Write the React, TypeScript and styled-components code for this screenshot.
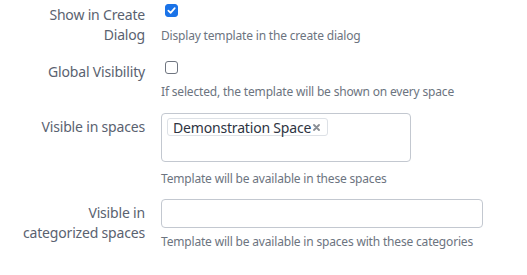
import React from "react";
import styled, { createGlobalStyle } from "styled-components";

const Global = createGlobalStyle`
  html, body { margin: 0; padding: 0; background: #ffffff; }
  body { font-family: "Noto Sans", "Open Sans", sans-serif; }
`;

const Form = styled.div`
  display: flex;
  flex-direction: column;
  padding-top: 4px;
`;

const Row = styled.div<{ $gap: number }>`
  display: grid;
  grid-template-columns: 145px 1fr;
  column-gap: 16px;
  margin-bottom: ${(p) => p.$gap}px;
`;

const Label = styled.label<{ $pt: number }>`
  justify-self: end;
  text-align: right;
  width: 128px;
  padding-top: ${(p) => p.$pt}px;
  font-size: 14px;
  letter-spacing: -0.18px;
  line-height: 20px;
  color: #5a6270;
`;

const Control = styled.div`
  display: flex;
  flex-direction: column;
  align-items: flex-start;
`;

const Help = styled.div<{ $mt: number }>`
  margin-top: ${(p) => p.$mt}px;
  font-size: 12px;
  letter-spacing: -0.18px;
  line-height: 18px;
  color: #6c7480;
`;

const Check = styled.span<{ $on?: boolean }>`
  display: inline-flex;
  align-items: center;
  justify-content: center;
  box-sizing: border-box;
  width: 13px;
  height: 13px;
  margin-left: 4px;
  border-radius: 3px;
  border: 1px solid ${(p) => (p.$on ? "#1a73e8" : "#6f7580")};
  background: ${(p) => (p.$on ? "#1a73e8" : "#ffffff")};
`;

const Box = styled.div<{ $w: number; $h: number }>`
  box-sizing: border-box;
  width: ${(p) => p.$w}px;
  height: ${(p) => p.$h}px;
  border: 1px solid #c3c8d0;
  border-radius: 4px;
  padding: 4px 5px;
  display: flex;
  flex-wrap: wrap;
  align-items: flex-start;
  background: #fff;
`;

const Tag = styled.span`
  display: inline-flex;
  align-items: center;
  gap: 2px;
  box-sizing: border-box;
  height: 18px;
  padding: 0 7px 0 5px;
  border: 1px solid #dde1e6;
  border-radius: 3px;
  font-size: 14px;
  letter-spacing: -0.18px;
  color: #2e3442;
  background: #fff;
`;

export default function App() {
  return (
    <>
      <Global />
      <Form>
        <Row $gap={16}>
          <Label $pt={1}>Show in Create Dialog</Label>
          <Control>
            <Check $on>
              <svg width="9" height="9" viewBox="0 0 10 10">
                <path d="M1.5 5.2 L4 7.6 L8.6 2.4" fill="none" stroke="#fff" strokeWidth="1.9" strokeLinecap="round" strokeLinejoin="round" />
              </svg>
            </Check>
            <Help $mt={10}>Display template in the create dialog</Help>
          </Control>
        </Row>
        <Row $gap={12}>
          <Label $pt={1}>Global Visibility</Label>
          <Control>
            <Check />
            <Help $mt={9}>If selected, the template will be shown on every space</Help>
          </Control>
        </Row>
        <Row $gap={11}>
          <Label $pt={4}>Visible in spaces</Label>
          <Control>
            <Box $w={250} $h={49}>
              <Tag>
                Demonstration Space
                <svg width="7" height="7" viewBox="0 0 7 7">
                  <path d="M1 1 L6 6 M6 1 L1 6" stroke="#8a8f96" strokeWidth="1.8" strokeLinecap="round" />
                </svg>
              </Tag>
            </Box>
            <Help $mt={8}>Template will be available in these spaces</Help>
          </Control>
        </Row>
        <Row $gap={0}>
          <Label $pt={4}>Visible in categorized spaces</Label>
          <Control>
            <Box $w={322} $h={29} />
            <Help $mt={5}>Template will be available in spaces with these categories</Help>
          </Control>
        </Row>
      </Form>
    </>
  );
}
